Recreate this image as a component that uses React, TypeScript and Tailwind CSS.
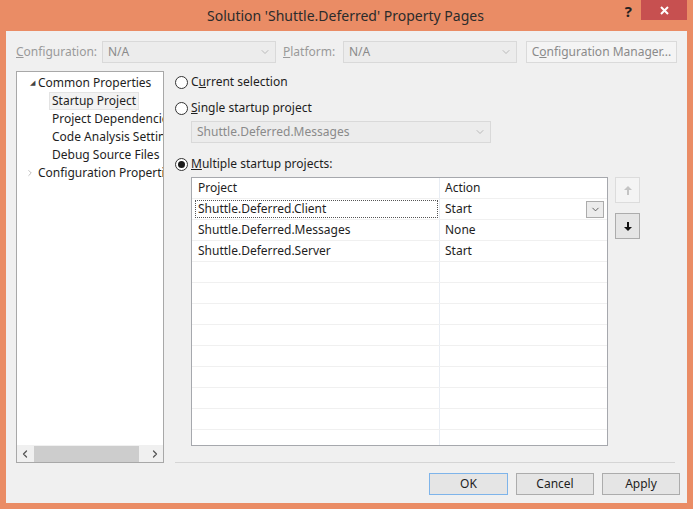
import { ChevronDown, ChevronLeft, ChevronRight } from "lucide-react";

const font = { fontFamily: '"Noto Sans", "Open Sans", sans-serif' };

function Radio({ checked }: { checked?: boolean }) {
  return (
    <span className="flex h-[13px] w-[13px] shrink-0 items-center justify-center rounded-full border border-[#333] bg-white">
      {checked ? <span className="h-[7px] w-[7px] rounded-full bg-[#1a1a1a]" /> : null}
    </span>
  );
}

function DisabledCombo({ text, className }: { text: string; className: string }) {
  return (
    <div
      className={`flex h-[22px] items-center justify-between border border-[#d9d9d9] bg-[#ececec] pl-[5px] pr-[4px] text-[#8a8a8a] ${className}`}
    >
      <span>{text}</span>
      <ChevronDown className="h-3 w-3 shrink-0 text-[#a8a8a8]" strokeWidth={1.5} />
    </div>
  );
}

const rows = [
  { project: "Shuttle.Deferred.Client", action: "Start" },
  { project: "Shuttle.Deferred.Messages", action: "None" },
  { project: "Shuttle.Deferred.Server", action: "Start" },
];

export default function App() {
  return (
    <div
      className="flex h-[509px] w-[693px] flex-col overflow-hidden bg-[#ea8c65] text-[12px] text-[#1e1e1e]"
      style={font}
    >
      {/* title bar */}
      <div className="flex h-[31px] shrink-0 items-start">
        <div className="flex h-[31px] flex-1 items-center justify-center pl-[66px]">
          <span className="-mt-[1px] text-[14px] text-[#2b2b2b]">
            Solution 'Shuttle.Deferred' Property Pages
          </span>
        </div>
        <span className="mr-[9px] mt-[1px] text-[15px] font-bold leading-[20px] text-[#222]">?</span>
        <div className="mr-[6px] flex h-[20px] w-[46px] shrink-0 items-center justify-center bg-[#c75050]">
          <svg width="9" height="9" viewBox="0 0 9 9">
            <path d="M1 1l7 7M8 1l-7 7" stroke="#fff" strokeWidth="2" />
          </svg>
        </div>
      </div>

      {/* content */}
      <div className="mx-[6px] mb-[6px] flex flex-1 flex-col bg-[#f0f0f0] pl-[10px] pt-[10px]">
        {/* configuration row */}
        <div className="flex h-[22px] items-center">
          <span className="w-[86px] text-[#9a9a9a]">
            <span className="underline">C</span>onfiguration:
          </span>
          <DisabledCombo text="N/A" className="w-[174px]" />
          <span className="ml-[7px] w-[60px] text-[#9a9a9a]">
            <span className="underline">P</span>latform:
          </span>
          <DisabledCombo text="N/A" className="w-[174px]" />
          <div className="ml-[9px] flex h-[22px] w-[151px] items-center justify-center border border-[#dadada] bg-[#f4f4f4] text-[#8a8a8a]">
            C<span className="underline">o</span>nfiguration Manager...
          </div>
        </div>

        {/* main */}
        <div className="mt-[8px] flex">
          {/* tree */}
          <div className="flex h-[392px] w-[148px] shrink-0 flex-col border border-[#a8a8a8] bg-white">
            <div className="flex-1 overflow-hidden whitespace-nowrap pt-[2px]">
              <div className="flex h-[18px] items-center">
                <span className="ml-[13px] w-[8px] shrink-0 text-[7px] text-[#444]">◢</span>
                <span>Common Properties</span>
              </div>
              <div className="flex h-[18px] items-center">
                <span className="ml-[32px] border border-[#e3e3e3] bg-[#f2f2f2] px-[2px] leading-[16px]">
                  Startup Project
                </span>
              </div>
              {["Project Dependencies", "Code Analysis Settings", "Debug Source Files"].map((t) => (
                <div key={t} className="flex h-[18px] items-center pl-[35px]">
                  {t}
                </div>
              ))}
              <div className="flex h-[18px] items-center">
                <ChevronRight className="ml-[8px] h-[10px] w-[10px] shrink-0 text-[#999]" strokeWidth={1.5} />
                <span className="ml-[3px]">Configuration Properties</span>
              </div>
            </div>
            <div className="flex h-[17px] items-center bg-[#f0f0f0]">
              <ChevronLeft className="ml-[2px] h-[12px] w-[12px] shrink-0 text-[#555]" strokeWidth={2.5} />
              <div className="ml-[3px] h-[16px] w-[105px] bg-[#cdcdcd]" />
              <ChevronRight className="ml-[10px] h-[12px] w-[12px] shrink-0 text-[#555]" strokeWidth={2.5} />
            </div>
          </div>

          {/* right column */}
          <div className="ml-[11px] flex flex-col">
            <label className="mt-[1px] flex h-[20px] items-center gap-[3px]">
              <Radio />
              <span>
                C<span className="underline">u</span>rrent selection
              </span>
            </label>
            <label className="mt-[6px] flex h-[20px] items-center gap-[3px]">
              <Radio />
              <span>
                <span className="underline">S</span>ingle startup project
              </span>
            </label>
            <DisabledCombo text="Shuttle.Deferred.Messages" className="ml-[16px] mt-[3px] w-[300px]" />
            <label className="mt-[11px] flex h-[20px] items-center gap-[3px]">
              <Radio checked />
              <span>
                <span className="underline">M</span>ultiple startup projects:
              </span>
            </label>

            <div className="ml-[16px] mt-[3px] flex">
              <div className="flex h-[269px] w-[417px] flex-col overflow-hidden border border-[#a6a8ad] bg-white">
                <div className="flex h-[21px] shrink-0 border-b border-[#f0f0f0]">
                  <div className="flex w-[248px] items-center border-r border-[#e8edf4] pl-[6px]">Project</div>
                  <div className="flex flex-1 items-center pl-[5px]">Action</div>
                </div>
                {rows.map((r, i) => (
                  <div key={r.project} className="flex h-[21px] shrink-0 border-b border-[#f0f0f0]">
                    <div className="flex w-[248px] items-center border-r border-[#e8edf4] pl-[3px]">
                      <span
                        className={`flex h-[18px] w-[243px] items-center pl-[2px] ${
                          i === 0 ? "border border-dotted border-[#555]" : "border border-transparent"
                        }`}
                      >
                        {r.project}
                      </span>
                    </div>
                    <div className="flex flex-1 items-center justify-between pl-[5px] pr-[3px]">
                      <span>{r.action}</span>
                      {i === 0 ? (
                        <span className="flex h-[17px] w-[18px] items-center justify-center border border-[#acacac] bg-[#ececec]">
                          <ChevronDown className="h-[11px] w-[11px] text-[#555]" strokeWidth={2} />
                        </span>
                      ) : null}
                    </div>
                  </div>
                ))}
                {Array.from({ length: 9 }).map((_, i) => (
                  <div key={i} className="flex h-[21px] shrink-0 border-b border-[#f0f0f0]">
                    <div className="w-[248px] border-r border-[#e8edf4]" />
                    <div className="flex-1" />
                  </div>
                ))}
              </div>

              <div className="ml-[7px] flex flex-col">
                <div className="flex h-[26px] w-[25px] items-center justify-center border border-[#dcdcdc] bg-[#f4f4f4]">
                  <svg width="8" height="9" viewBox="0 0 8 9">
                    <path d="M3 9h2V4h3L4 0 0 4h3z" fill="#c4c4c4" />
                  </svg>
                </div>
                <div className="mt-[10px] flex h-[26px] w-[25px] items-center justify-center border border-[#acacac] bg-[#e5e5e5]">
                  <svg width="8" height="9" viewBox="0 0 8 9">
                    <path d="M3 0h2v5h3L4 9 0 5h3z" fill="#111" />
                  </svg>
                </div>
              </div>
            </div>

            <div className="mt-[16px] h-[1px] w-[500px] bg-[#d5d5d5]" />
          </div>
        </div>

        {/* buttons */}
        <div className="mt-[10px] flex justify-end gap-[8px] pr-[7px]">
          <div className="flex h-[22px] w-[79px] items-center justify-center border border-[#7eb4ea] bg-[#e5e5e5]">
            OK
          </div>
          <div className="flex h-[22px] w-[78px] items-center justify-center border border-[#acacac] bg-[#e5e5e5]">
            Cancel
          </div>
          <div className="flex h-[22px] w-[78px] items-center justify-center border border-[#acacac] bg-[#e5e5e5]">
            Apply
          </div>
        </div>
      </div>
    </div>
  );
}
